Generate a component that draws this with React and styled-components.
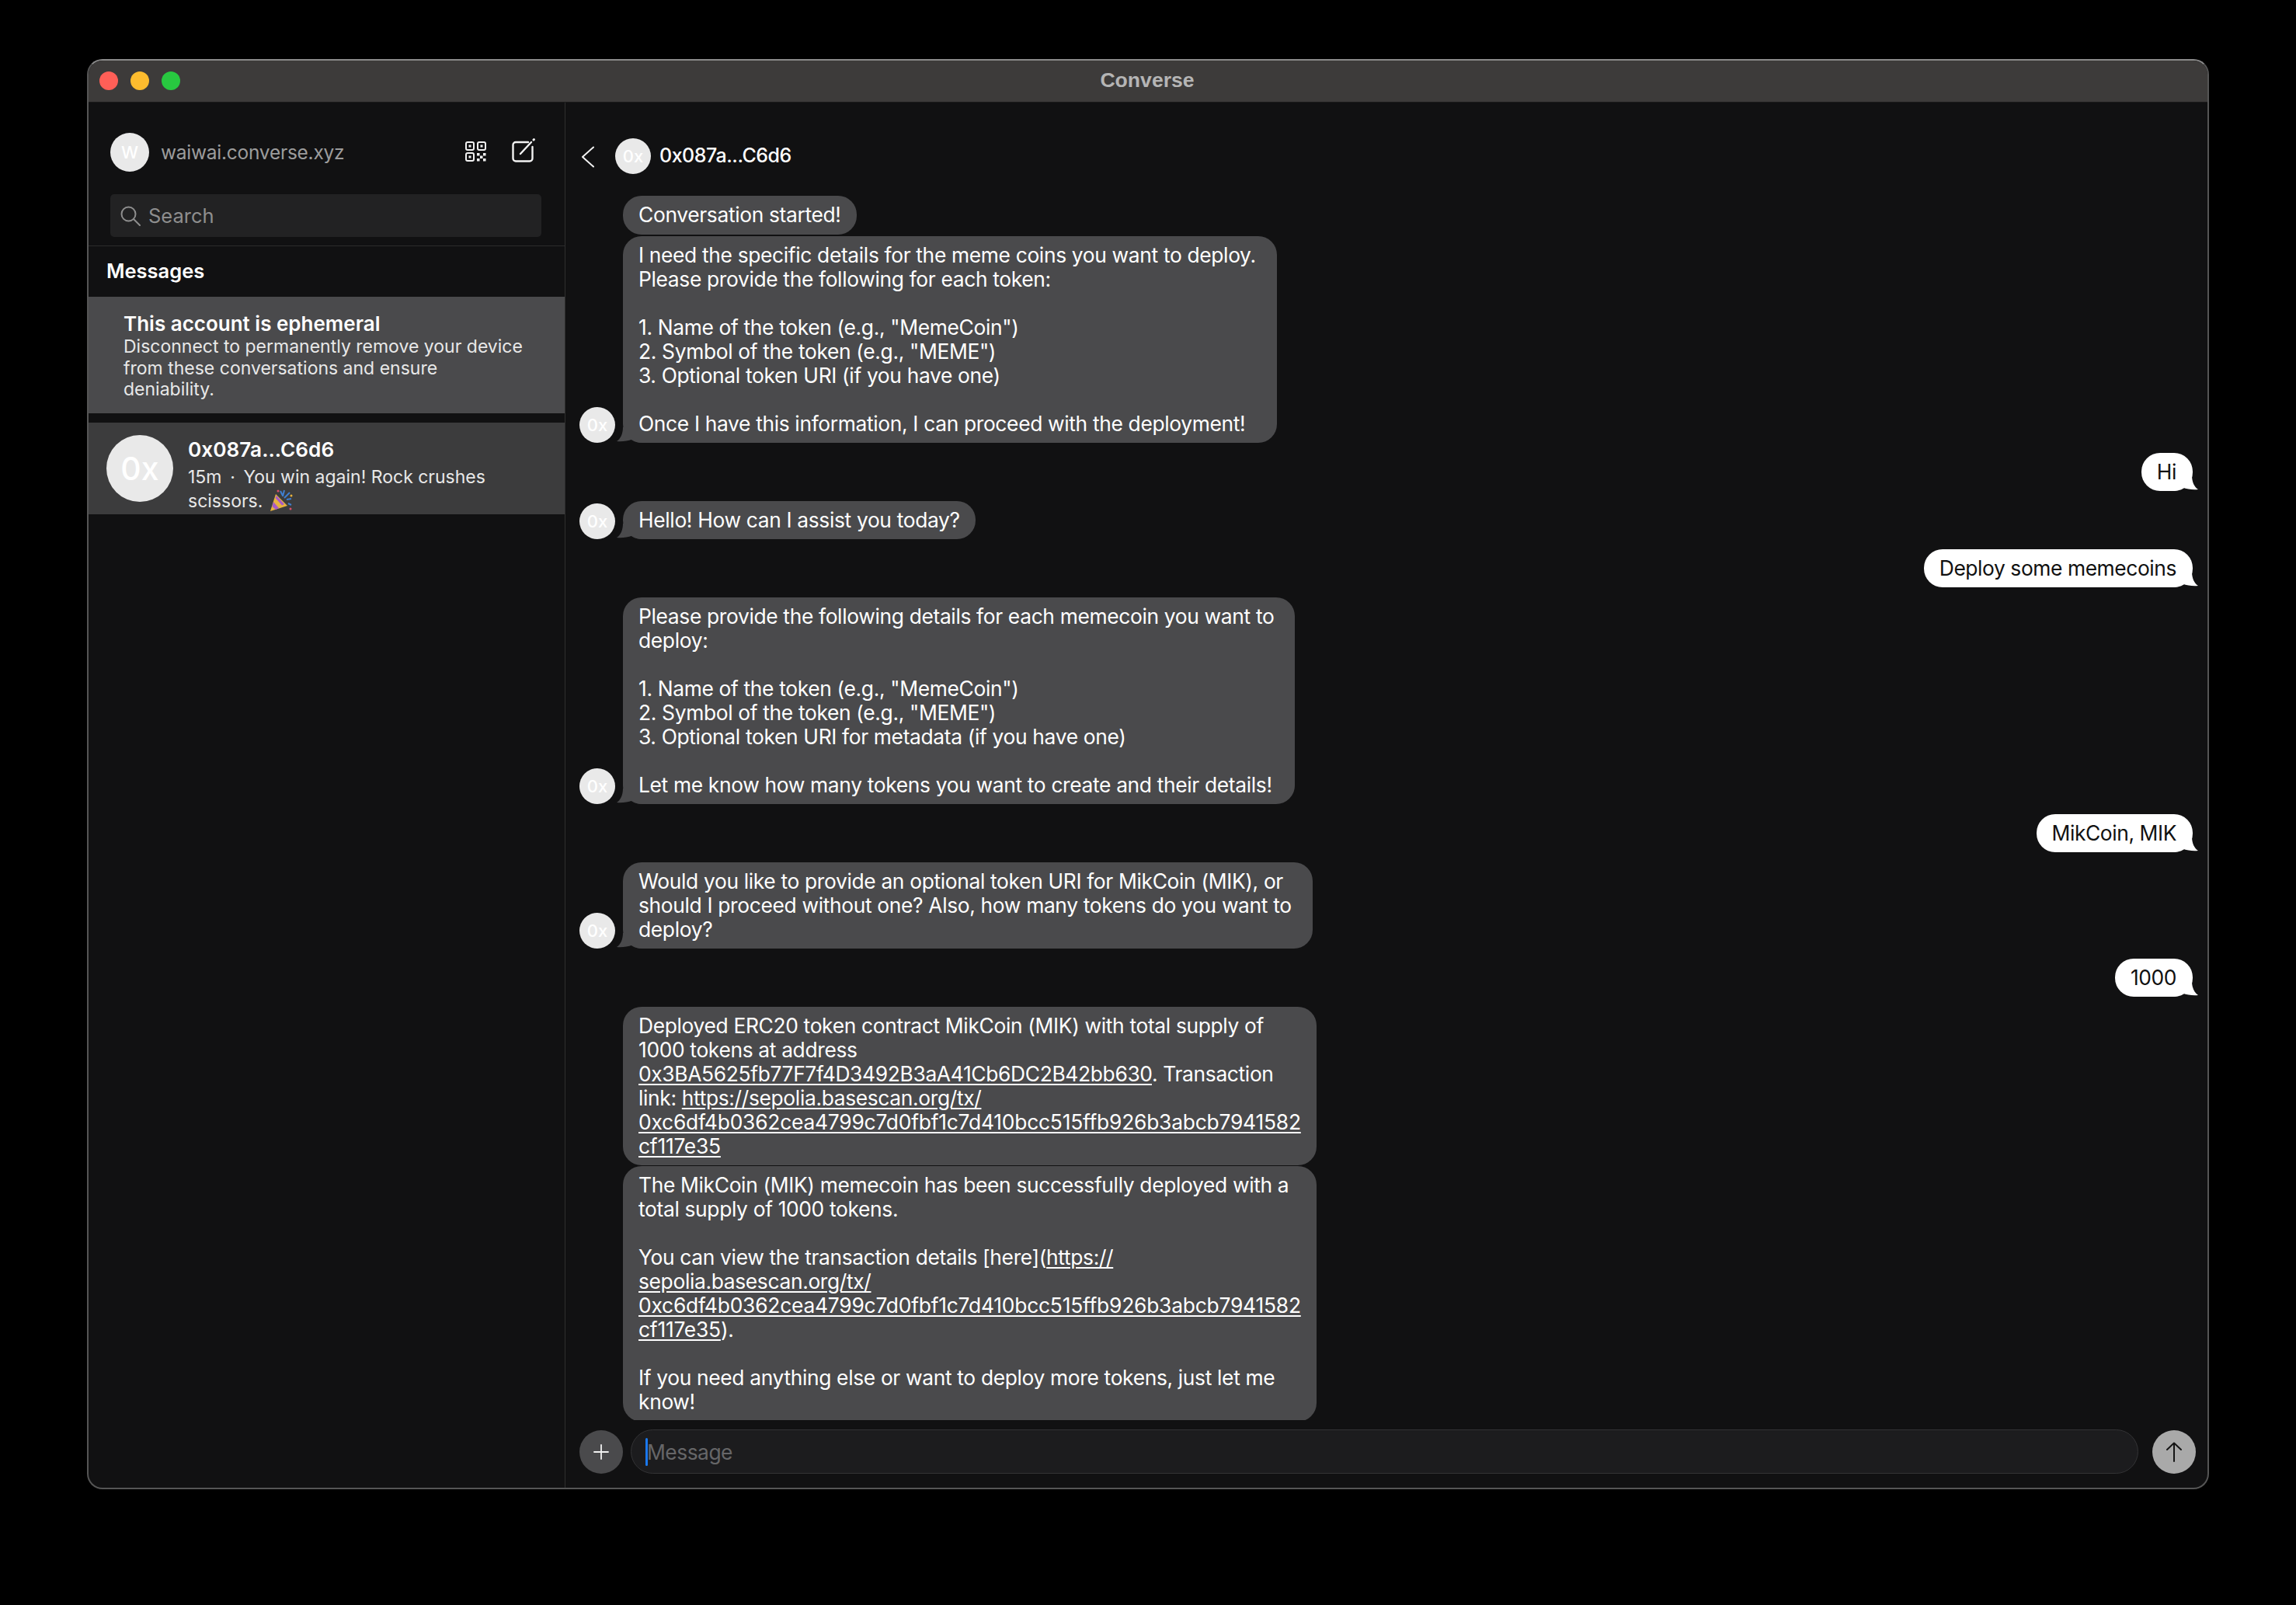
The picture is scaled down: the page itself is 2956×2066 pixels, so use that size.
import React from "react";
import styled, { createGlobalStyle } from "styled-components";

const Global = createGlobalStyle`
  html, body { margin: 0; padding: 0; background: #000; }
  body { font-family: Inter, "Liberation Sans", sans-serif; -webkit-font-smoothing: antialiased; }
  * { box-sizing: border-box; }
`;

const Page = styled.div`
  width: 2956px;
  height: 2066px;
  padding: 76px 112px 0;
  background: #000;
`;
const Win = styled.div`
  width: 2732px;
  height: 1841px;
  border-radius: 20px;
  border: 2px solid #555;
  border-top-color: #8a8a8a;
  background: #111112;
  overflow: hidden;
  display: flex;
  flex-direction: column;
`;
const TitleBar = styled.div`
  position: relative;
  height: 54px;
  flex: none;
  background: #3d3b3a;
  border-bottom: 1px solid #1a1a1a;
  display: flex;
  align-items: center;
  justify-content: center;
`;
const Lights = styled.div`
  position: absolute;
  left: 14px;
  top: 14px;
  display: flex;
  gap: 16px;
`;
const Light = styled.span`
  width: 24px;
  height: 24px;
  border-radius: 50%;
  background: ${(p) => p.$c};
`;
const Title = styled.div`
  font: 700 26.6px "Liberation Sans", sans-serif;
  color: #b5b5b5;
  margin-top: -2px;
  margin-right: 2px;
`;
const Body = styled.div`
  flex: 1;
  min-height: 0;
  display: flex;
`;
const Sidebar = styled.aside`
  width: 614px;
  flex: none;
  border-right: 1px solid #2e2e2e;
  display: flex;
  flex-direction: column;
`;
const SideTop = styled.div`
  padding: 39px 30px 11px 28px;
  border-bottom: 1px solid #2c2c2c;
`;
const Account = styled.div`
  display: flex;
  align-items: center;
  height: 50px;
  padding-right: 8px;
`;
const Avatar = styled.div`
  width: ${(p) => p.$size}px;
  height: ${(p) => p.$size}px;
  flex: none;
  border-radius: 50%;
  background: #e9e9e9;
  color: #fff;
  font-size: ${(p) => p.$font}px;
  font-weight: 500;
  display: flex;
  align-items: center;
  justify-content: center;
`;
const AccountName = styled.div`
  margin-left: 15px;
  font-size: 24.5px;
  letter-spacing: -0.25px;
  color: #9c9c9c;
  flex: 1;
`;
const IconBtn = styled.div`
  display: flex;
  margin-left: ${(p) => p.$ml || 0}px;
  margin-bottom: ${(p) => p.$mb || 0}px;
  color: #f2f2f2;
`;
const Search = styled.div`
  margin-top: 29px;
  height: 55px;
  border-radius: 5px;
  background: #222223;
  display: flex;
  align-items: center;
  padding-left: 13px;
  gap: 10px;
  color: #8e8e8e;
  font-size: 25.5px;
`;
const Heading = styled.div`
  padding: 16px 0 0 23px;
  height: 65px;
  font-size: 25.5px;
  font-weight: 600;
  color: #fff;
`;
const Notice = styled.div`
  height: 150px;
  background: #4a4a4c;
  padding: 19px 20px 0 45px;
  color: #e8e8e8;
  font-size: 23px;
  line-height: 27.5px;
  white-space: pre;
`;
const NoticeTitle = styled.div`
  font-size: 26px;
  font-weight: 600;
  line-height: 32px;
  color: #fff;
`;
const ConvCard = styled.div`
  margin-top: 12px;
  height: 118px;
  background: #3c3c3d;
  padding: 16px 0 0 23px;
  display: flex;
  overflow: hidden;
`;
const ConvText = styled.div`
  margin-left: 19px;
  padding-top: 2px;
  color: #e8e8e8;
  font-size: 23px;
  line-height: 27.5px;
  white-space: pre;
`;
const ConvName = styled.div`
  font-size: 26.2px;
  font-weight: 600;
  line-height: 34px;
  margin-bottom: 5px;
  color: #fff;
`;
const Popper = styled.svg`
  vertical-align: -6px;
  margin-left: 8px;
`;
const Chat = styled.main`
  flex: 1;
  min-width: 0;
  display: flex;
  flex-direction: column;
`;
const ChatHead = styled.header`
  height: 120px;
  flex: none;
  padding: 46px 0 0 20px;
  display: flex;
  align-items: flex-start;
`;
const Back = styled.svg`
  margin-top: 10px;
  margin-right: 26px;
`;
const ChatName = styled.div`
  margin-left: 11px;
  line-height: 44px;
  font-size: 25px;
  letter-spacing: -0.5px;
  font-weight: 500;
  color: #fff;
`;
const List = styled.div`
  flex: 1;
  min-height: 0;
  padding: 0 19px 0 18px;
  display: flex;
  flex-direction: column;
  overflow: hidden;
`;
const Row = styled.div`
  display: flex;
  align-items: flex-end;
  justify-content: ${(p) => (p.$mine ? "flex-end" : "flex-start")};
  margin-top: ${(p) => p.$gap}px;
`;
const AvatarSlot = styled.div`
  width: 56px;
  flex: none;
`;
const Bubble = styled.div`
  position: relative;
  padding: 9.25px ${(p) => p.$pr}px 9.25px 20px;
  border-radius: 24px;
  background: ${(p) => (p.$mine ? "#fff" : "#4a4a4c")};
  color: ${(p) => (p.$mine ? "#111" : "#fff")};
  font-size: 26.4px;
  letter-spacing: ${(p) => (p.$mine ? "-0.42px" : "-0.35px")};
  line-height: 31px;
  white-space: pre;
`;
const BubbleText = styled.div`
  position: relative;
`;
const Tail = styled.svg`
  position: absolute;
  bottom: 0;
  ${(p) => (p.$mine ? "right: -9px; transform: scaleX(-1);" : "left: -10px;")}
`;
const Ln = styled.span`
  text-decoration: underline;
  text-underline-offset: 3px;
`;
const Hash = styled(Ln)`
  letter-spacing: -0.22px;
`;
const Composer = styled.footer`
  flex: none;
  padding: 12px 15px 18px 18px;
  display: flex;
  align-items: center;
`;
const RoundBtn = styled.div`
  width: 56px;
  height: 56px;
  flex: none;
  border-radius: 50%;
  background: ${(p) => p.$bg};
  display: flex;
  align-items: center;
  justify-content: center;
`;
const InputBox = styled.div`
  flex: 1;
  height: 57px;
  margin: 0 18px 0 10px;
  border-radius: 29px;
  background: #1c1c1e;
  border: 1px solid #333335;
  display: flex;
  align-items: center;
  padding-left: 18px;
  color: #666668;
  font-size: 26.4px;
  letter-spacing: -0.5px;
`;
const Caret = styled.span`
  width: 3px;
  height: 36px;
  border-radius: 2px;
  background: #1a78ee;
  margin-right: -1px;
`;

const Qr = () => (
  <svg width="27" height="26" viewBox="0 0 27 26" fill="none" stroke="currentColor" strokeWidth="2">
    <rect x="1" y="1" width="10" height="10" rx="2" />
    <rect x="16" y="1" width="10" height="10" rx="2" />
    <rect x="1" y="15" width="10" height="10" rx="2" />
    <g fill="currentColor" stroke="none">
      <rect x="4.5" y="4.5" width="3" height="3" />
      <rect x="19.5" y="4.5" width="3" height="3" />
      <rect x="4.5" y="18.5" width="3" height="3" />
      <rect x="15" y="15" width="3.5" height="3.5" />
      <rect x="23" y="15" width="3.5" height="3.5" />
      <rect x="19" y="18.5" width="3.5" height="3.5" />
      <rect x="15" y="22" width="3.5" height="3.5" />
      <rect x="23" y="22" width="3.5" height="3.5" />
    </g>
  </svg>
);
const Compose = () => (
  <svg width="30" height="31" viewBox="0 0 30 31" fill="none" stroke="currentColor" strokeWidth="2.4" strokeLinecap="round">
    <path d="M21 5H5a3.500 3.500 0 0 0-3.500 3.500V26A3.500 3.500 0 0 0 5 29.500h18a3.500 3.500 0 0 0 3.500-3.500V11" />
    <path d="M11 20 25 5" />
    <path d="M28 2 28.400 1.600" strokeWidth="3" />
  </svg>
);
const SearchIcon = () => (
  <svg width="26" height="26" viewBox="0 0 26 26" fill="none" stroke="#8e8e8e" strokeWidth="2" strokeLinecap="round">
    <circle cx="10.5" cy="10.5" r="9" />
    <path d="m17 17 8 8" />
  </svg>
);
const PartyIcon = () => (
  <Popper width="31" height="30" viewBox="0 0 31 30">
    <path d="M2 29 9 7l15 15z" fill="#e8b33f" />
    <path d="M6 17l7 8-4 2-4.500-4zM10 9l10 11-3 1.500L8.500 12z" fill="#a75ac8" />
    <path d="M15 3l3 6M20 2l-2 8M27 5l-7 7M29 13l-6 1M25 19l4 2" stroke="#3f7fd0" strokeWidth="2" fill="none" />
    <circle cx="12" cy="3" r="1.500" fill="#d9506a" />
    <circle cx="28" cy="26" r="1.500" fill="#d9506a" />
    <circle cx="29" cy="9" r="1.500" fill="#e8b33f" />
  </Popper>
);
const TailShape = ({ mine }) => (
  <Tail $mine={mine} width="40" height="20" viewBox="0 0 40 20">
    <path
      d="M10 0C10 8 7 15 2 18 8 18.500 16 18 22 15.500 25 18.500 30 20 36 20L40 20 40 0Z"
      fill={mine ? "#fff" : "#4a4a4c"}
    />
  </Tail>
);

const TX = "0xc6df4b0362cea4799c7d0fbf1c7d410bcc515ffb926b3abcb7941582";

const messages = [
  { gap: 0, text: "Conversation started!" },
  {
    gap: 2, avatar: true, tail: true, pr: 27,
    text: `I need the specific details for the meme coins you want to deploy.
Please provide the following for each token:

1. Name of the token (e.g., "MemeCoin")
2. Symbol of the token (e.g., "MEME")
3. Optional token URI (if you have one)

Once I have this information, I can proceed with the deployment!`,
  },
  { gap: 12.5, mine: true, tail: true, text: "Hi" },
  { gap: 12.5, avatar: true, tail: true, text: "Hello! How can I assist you today?" },
  { gap: 12.5, mine: true, tail: true, text: "Deploy some memecoins" },
  {
    gap: 12.5, avatar: true, tail: true, pr: 27,
    text: `Please provide the following details for each memecoin you want to
deploy:

1. Name of the token (e.g., "MemeCoin")
2. Symbol of the token (e.g., "MEME")
3. Optional token URI for metadata (if you have one)

Let me know how many tokens you want to create and their details!`,
  },
  { gap: 12.5, mine: true, tail: true, text: "MikCoin, MIK" },
  {
    gap: 12.5, avatar: true, tail: true, pr: 27,
    text: `Would you like to provide an optional token URI for MikCoin (MIK), or
should I proceed without one? Also, how many tokens do you want to
deploy?`,
  },
  { gap: 12.5, mine: true, tail: true, text: "1000" },
  {
    gap: 12.5,
    text: (
      <>
        {"Deployed ERC20 token contract MikCoin (MIK) with total supply of\n1000 tokens at address\n"}
        <Ln>0x3BA5625fb77F7f4D3492B3aA41Cb6DC2B42bb630</Ln>
        {". Transaction\nlink: "}
        <Ln>{"https://sepolia.basescan.org/tx/\n"}</Ln>
        <Hash>{`${TX}\ncf117e35`}</Hash>
      </>
    ),
  },
  {
    gap: 1,
    text: (
      <>
        {"The MikCoin (MIK) memecoin has been successfully deployed with a\ntotal supply of 1000 tokens.\n\nYou can view the transaction details [here]("}
        <Ln>{"https://\nsepolia.basescan.org/tx/\n"}</Ln>
        <Hash>{`${TX}\ncf117e35`}</Hash>
        {").\n\nIf you need anything else or want to deploy more tokens, just let me\nknow!"}
      </>
    ),
  },
];

export default function App() {
  return (
    <Page>
      <Global />
      <Win>
        <TitleBar>
          <Lights>
            <Light $c="#ff5f57" />
            <Light $c="#febc2e" />
            <Light $c="#28c840" />
          </Lights>
          <Title>Converse</Title>
        </TitleBar>
        <Body>
          <Sidebar>
            <SideTop>
              <Account>
                <Avatar $size={50} $font={22}>W</Avatar>
                <AccountName>waiwai.converse.xyz</AccountName>
                <IconBtn $mb={3}><Qr /></IconBtn>
                <IconBtn $ml={33} $mb={6}><Compose /></IconBtn>
              </Account>
              <Search>
                <SearchIcon />
                Search
              </Search>
            </SideTop>
            <Heading>Messages</Heading>
            <Notice>
              <NoticeTitle>This account is ephemeral</NoticeTitle>
              {"Disconnect to permanently remove your device\nfrom these conversations and ensure\ndeniability."}
            </Notice>
            <ConvCard>
              <Avatar $size={86} $font={41}>0x</Avatar>
              <ConvText>
                <ConvName>0x087a...C6d6</ConvName>
                {"15m \u2009·\u2009 You win again! Rock crushes\nscissors."}
                <PartyIcon />
              </ConvText>
            </ConvCard>
          </Sidebar>
          <Chat>
            <ChatHead>
              <Back width="18" height="28" viewBox="0 0 18 28" fill="none" stroke="#f2f2f2" strokeWidth="2" strokeLinecap="round" strokeLinejoin="round">
                <path d="M16 1.500 2 14l14 12.500" />
              </Back>
              <Avatar $size={46} $font={22}>0x</Avatar>
              <ChatName>0x087a...C6d6</ChatName>
            </ChatHead>
            <List>
              {messages.map((m, i) => (
                <Row key={i} $mine={m.mine} $gap={m.gap}>
                  {!m.mine &&
                    (m.avatar ? (
                      <AvatarSlot><Avatar $size={46} $font={22}>0x</Avatar></AvatarSlot>
                    ) : (
                      <AvatarSlot />
                    ))}
                  <Bubble $mine={m.mine} $pr={m.pr || (m.mine ? 21 : 20)}>
                    {m.tail && <TailShape mine={m.mine} />}
                    <BubbleText>{m.text}</BubbleText>
                  </Bubble>
                </Row>
              ))}
            </List>
            <Composer>
              <RoundBtn $bg="#4a4a4c">
                <svg width="20" height="20" viewBox="0 0 20 20" stroke="#f2f2f2" strokeWidth="1.800" strokeLinecap="round">
                  <path d="M10 1v18M1 10h18" />
                </svg>
              </RoundBtn>
              <InputBox>
                <Caret />
                Message
              </InputBox>
              <RoundBtn $bg="#a9a9a9">
                <svg width="20" height="26" viewBox="0 0 20 26" fill="none" stroke="#151515" strokeWidth="2" strokeLinecap="round" strokeLinejoin="round">
                  <path d="M10 25V1.500M1 10l9-8.500 9 8.500" />
                </svg>
              </RoundBtn>
            </Composer>
          </Chat>
        </Body>
      </Win>
    </Page>
  );
}
